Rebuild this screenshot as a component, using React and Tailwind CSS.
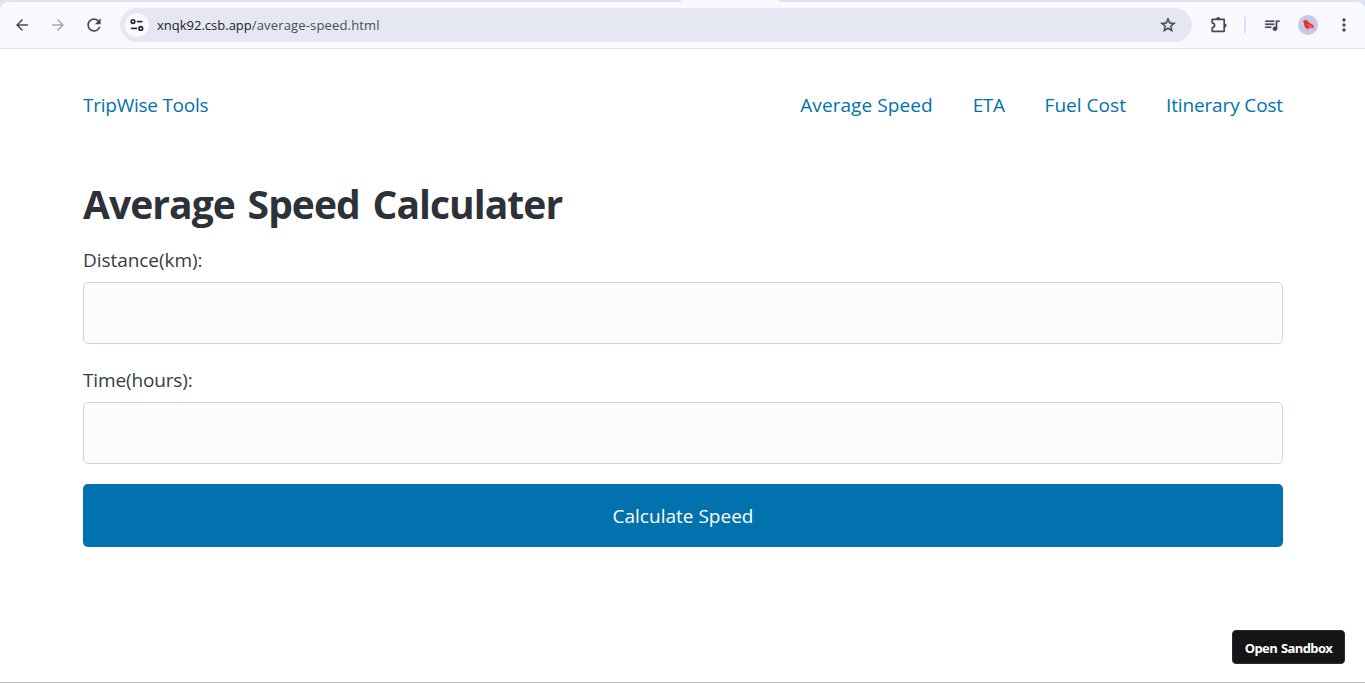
import React from "react";
import { MdArrowBack, MdArrowForward, MdRefresh, MdStarBorder, MdQueueMusic, MdMoreVert } from "react-icons/md";

function TuneIcon() {
  return (
    <svg width="14" height="14" viewBox="0 0 14 14" fill="none" stroke="#1f2024" strokeWidth="1.6">
      <circle cx="3" cy="3.6" r="1.8" />
      <path d="M6.8 3.6H12.4" />
      <circle cx="10.8" cy="10.4" r="1.8" />
      <path d="M1 10.4H7.2" />
    </svg>
  );
}

function PuzzleIcon() {
  return (
    <svg width="18" height="18" viewBox="0 0 18 18">
      <path
        d="M2.2 3.3H14.2V15.3H2.2V11.8C5.4 11.3 5.4 7.3 2.2 6.8Z"
        fill="none"
        stroke="#454a5c"
        strokeWidth="1.7"
        strokeLinejoin="round"
      />
      <path d="M6.2 3a2 2 0 0 1 4 0ZM14.6 7.4a2 2 0 0 1 0 4Z" fill="#454a5c" />
    </svg>
  );
}

function Avatar() {
  return (
    <svg width="20" height="20" viewBox="0 0 20 20">
      <circle cx="10" cy="10" r="10" fill="#c5c9e6" />
      <path d="M4.8 6.4 6.6 5.2C8.5 4.8 9.8 6 10.8 7.2L15.6 10.5V13.6L12 12.9 9.6 14C6.8 13.2 5.8 10.5 6 7.6Z" fill="#f02b3c" />
      <path d="M9.3 8.4 15.6 12.4 15.4 13.6 11.4 12.6Z" fill="#ff7043" />
      <path d="M9.4 13.6 9 15M11 13.2 11.3 14.6" stroke="#f28b7c" strokeWidth=".7" />
    </svg>
  );
}

function BrowserBar() {
  return (
    <header className="h-[49px] shrink-0 bg-[#dfe2f1]">
      <div className="flex h-0.5 justify-start">
        <div className="ml-[681px] h-0.5 w-[98px] bg-[#faf9ff]" />
      </div>
      <div className="flex h-[47px] items-center rounded-t-lg border-b border-[#dfe1ee] bg-[#faf9ff] pl-[13px] text-[#454a5c]">
        <MdArrowBack size={18} className="shrink-0" />
        <MdArrowForward size={18} className="ml-[18px] shrink-0 text-[#a9a9ad]" />
        <MdRefresh size={20} className="ml-[17px] shrink-0" />
        <div className="ml-4 flex h-[34px] w-[1072px] shrink-0 items-center rounded-full bg-[#e5e8f3] pl-[5px]">
          <div className="flex size-6 items-center justify-center rounded-full bg-[#faf9ff]">
            <TuneIcon />
          </div>
          <p className="ml-2 pt-px font-['Open_Sans',sans-serif] text-[13px] tracking-[0.16px] text-[#4c4d55]">
            <span className="tracking-[0px] text-[#1f2024]">xnqk92.csb.app</span>/average-speed.html
          </p>
          <MdStarBorder size={18} className="mr-[15px] ml-auto stroke-[#44474f] stroke-[0.5px] text-[#44474f] [&>path:first-child]:stroke-none" />
        </div>
        <div className="ml-[18px] shrink-0"><PuzzleIcon /></div>
        <div className="ml-[16px] h-4 w-0.5 shrink-0 bg-[#d3e3fd]" />
        <MdQueueMusic size={18} className="ml-[17px] shrink-0 stroke-[#454a5c] stroke-[0.3px] [&>path:first-child]:stroke-none" />
        <div className="ml-[17px] shrink-0"><Avatar /></div>
        <MdMoreVert size={20} className="ml-4 shrink-0" />
      </div>
    </header>
  );
}

function Field({ label, id, className }) {
  return (
    <div className={className}>
      <label htmlFor={id} className="mb-[7px] block h-[30px] leading-[30px] text-[#373c44]">{label}</label>
      <input id={id} type="number" className="block h-[62px] w-full rounded-[5px] border border-[#cfd5e2] bg-[#fbfcfc] px-5 outline-none" />
    </div>
  );
}

export default function App() {
  return (
    <div className="flex h-[683px] w-full flex-col overflow-hidden border-b border-[#b6babf] bg-white">
      <BrowserBar />
      <div className="relative flex-1 px-[83px] font-['Open_Sans',sans-serif] text-[19px]">
        <nav className="mr-[-1px] flex h-[112px] items-center justify-between text-[#0172ad]">
          <a href="#home" className="tracking-[-0.25px]">TripWise Tools</a>
          <div className="flex gap-10">
            <a href="#speed" className="tracking-[0.08px]">Average Speed</a>
            <a href="#eta" className="tracking-[-0.4px]">ETA</a>
            <a href="#fuel" className="tracking-[0.04px]">Fuel Cost</a>
            <a href="#itinerary" className="tracking-[-0.14px]">Itinerary Cost</a>
          </div>
        </nav>
        <main className="mr-[-1px] pt-[18px]">
          <h1 className="mb-[16px] h-[50px] text-[39px] leading-[49px] font-bold tracking-[-0.95px] [word-spacing:3.6px] text-[#2d3138]">Average Speed Calculater</h1>
          <form>
            <Field label="Distance(km):" id="distance" className="mb-[21px] tracking-[-0.06px]" />
            <Field label="Time(hours):" id="time" className="mb-5 tracking-[-0.14px]" />
            <button type="button" className="h-[63px] w-full rounded-[5px] bg-[#0172ad] pt-px tracking-[0.01px] text-white">Calculate Speed</button>
          </form>
        </main>
        <button type="button" className="absolute right-5 bottom-[18px] h-[34px] w-[113px] rounded-[4px] border border-[#2a2a2a] bg-[#151515] pt-[3px] text-[13px] font-bold tracking-[-0.6px] [word-spacing:1px] text-white">Open Sandbox</button>
      </div>
    </div>
  );
}
